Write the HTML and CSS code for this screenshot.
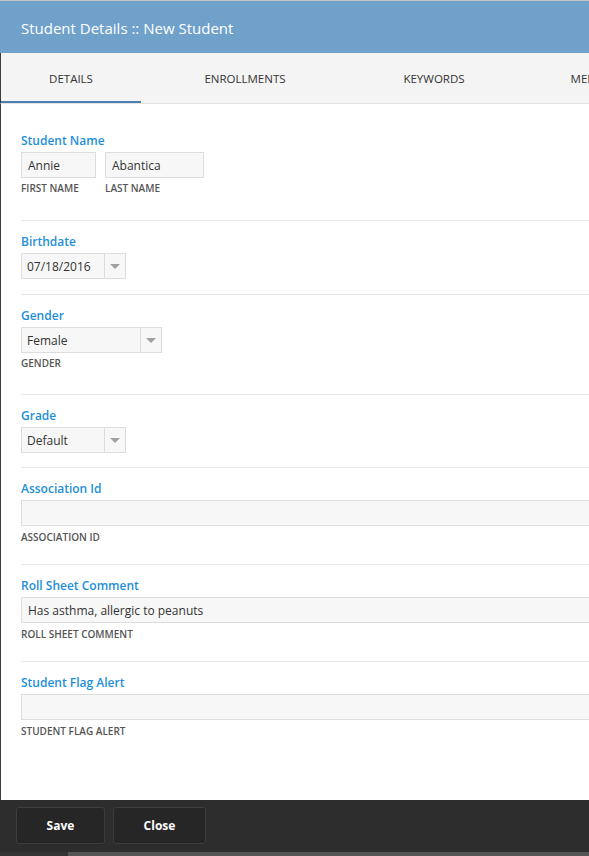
FILE: index.html
```html
<!DOCTYPE html>
<html lang="en">
<head>
    <meta charset="UTF-8">
    <meta name="viewport" content="width=device-width, initial-scale=1.0">
    <title>Student Details :: New Student</title>
    <link rel="stylesheet" href="styles.css">
</head>
<body>
    <div id="modal">
        <div id="header"><h1>Student Details :: New Student</h1></div>
        <div id="tabs">
            <div class="tab tab-details active">Details</div>
            <div class="tab tab-enrollments">Enrollments</div>
            <div class="tab tab-keywords">Keywords</div>
            <div class="tab tab-medical">Medical</div>
        </div>
        <div id="content">
            <div class="section">
                <div class="label">Student Name</div>
                <div class="row">
                    <div class="field">
                        <div class="input w-first">Annie</div>
                        <div class="sublabel">First Name</div>
                    </div>
                    <div class="field">
                        <div class="input w-last">Abantica</div>
                        <div class="sublabel">Last Name</div>
                    </div>
                </div>
            </div>
            <div class="section">
                <div class="label">Birthdate</div>
                <div class="select w-small">
                    <span class="value">07/18/2016</span>
                    <span class="arrow"></span>
                </div>
            </div>
            <div class="section">
                <div class="label">Gender</div>
                <div class="select w-medium">
                    <span class="value">Female</span>
                    <span class="arrow"></span>
                </div>
                <div class="sublabel">Gender</div>
            </div>
            <div class="section compact">
                <div class="label">Grade</div>
                <div class="select w-small">
                    <span class="value">Default</span>
                    <span class="arrow"></span>
                </div>
            </div>
            <div class="section text-section">
                <div class="label">Association Id</div>
                <div class="input wide"></div>
                <div class="sublabel">Association Id</div>
            </div>
            <div class="section text-section">
                <div class="label">Roll Sheet Comment</div>
                <div class="input wide">Has asthma, allergic to peanuts</div>
                <div class="sublabel">Roll Sheet Comment</div>
            </div>
            <div class="section text-section last">
                <div class="label">Student Flag Alert</div>
                <div class="input wide"></div>
                <div class="sublabel">Student Flag Alert</div>
            </div>
        </div>
        <div id="footer">
            <button class="btn btn-save">Save</button>
            <button class="btn btn-close">Close</button>
        </div>
    </div>
    <div id="taskbar"><div class="taskbar-left"></div></div>
</body>
</html>
```

FILE: styles.css
```css
body {
    font-family: "Open Sans", "DejaVu Sans", sans-serif;
    margin: 0;
    padding: 0;
    background-color: #333333;
    overflow: hidden;
    width: 589px;
    height: 856px;
}

* {
    box-sizing: border-box;
}

#modal {
    display: flex;
    flex-direction: column;
    width: 760px;
    height: 852px;
    background-color: #ffffff;
}

#header {
    height: 53px;
    border-top: 1px solid #c4c4c4;
    background-color: #6fa1ca;
    display: flex;
    align-items: center;
    padding: 2px 21px 0;
}

#header h1 {
    margin: 0;
    font-size: 15px;
    font-weight: normal;
    color: #ffffff;
}

#tabs {
    display: flex;
    height: 51px;
    background-color: #f4f4f4;
    border-left: 1px solid #3c3c3c;
    border-bottom: 1px solid #e2e2e2;
}

.tab {
    display: flex;
    align-items: center;
    justify-content: center;
    font-size: 11.5px;
    color: #333333;
    text-transform: uppercase;
    border-bottom: 2px solid transparent;
    padding-top: 2px;
}

.tab.active {
    border-bottom-color: #4a7fb5;
}

.tab-details {
    width: 140px;
}

.tab-enrollments {
    width: 208px;
}

.tab-keywords {
    width: 170px;
}

.tab-medical {
    width: 152px;
}

#content {
    flex: 1;
    border-left: 1px solid #3c3c3c;
    padding: 16px 0 0 20px;
}

.section {
    padding: 14px 0 15px;
    border-bottom: 1px solid #e8e8e8;
}

.section.compact {
    padding-bottom: 14px;
}

.section.last {
    border-bottom: none;
}

.label {
    font-size: 12px;
    line-height: 14px;
    font-weight: 600;
    color: #1e8fd8;
    margin-bottom: 4px;
}

.row {
    display: flex;
    gap: 9px;
}

.input, .select {
    height: 26px;
    border: 1px solid #dddddd;
    background-color: #f7f7f7;
    font-size: 12px;
    color: #333333;
    display: flex;
    align-items: center;
}

.input {
    padding-left: 6px;
}

.w-first {
    width: 75px;
}

.w-last {
    width: 99px;
}

.wide {
    width: 100%;
}

.w-small {
    width: 105px;
}

.w-medium {
    width: 141px;
}

.select .value {
    flex: 1;
    padding-left: 5px;
}

.select .arrow {
    width: 21px;
    height: 100%;
    border-left: 1px solid #dddddd;
    display: flex;
    align-items: center;
    justify-content: center;
}

.select .arrow::after {
    content: "";
    border-left: 5px solid transparent;
    border-right: 5px solid transparent;
    border-top: 5px solid #a0a0a0;
    margin-top: 1px;
}

.sublabel {
    font-size: 10px;
    line-height: 12px;
    font-weight: 600;
    color: #555555;
    text-transform: uppercase;
    margin: 4px 0 10px;
}

.row .sublabel {
    margin-bottom: 11px;
}

.text-section .sublabel {
    margin: 5px 0 6px;
}

#footer {
    height: 52px;
    background-color: #2d2d2d;
    display: flex;
    align-items: center;
    gap: 8px;
    padding: 0 0 1px 16px;
}

.btn {
    font-family: "Open Sans", "DejaVu Sans", sans-serif;
    height: 37px;
    background-color: #262626;
    border: 1px solid #3d3d3d;
    border-radius: 3px;
    color: #ffffff;
    font-size: 12px;
    font-weight: bold;
    cursor: pointer;
}

.btn-save {
    width: 89px;
}

.btn-close {
    width: 93px;
}

#taskbar {
    height: 4px;
    background-color: #555555;
}

.taskbar-left {
    width: 68px;
    height: 100%;
    background-color: #333333;
}
```
